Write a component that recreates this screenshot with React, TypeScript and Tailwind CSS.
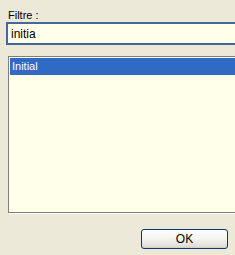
import React from "react";

export default function App() {
  return (
    <div
      className="w-[235px] h-[255px] overflow-hidden bg-[#ECE9D8] flex flex-col text-[11px] text-black"
      style={{ fontFamily: '"Liberation Sans", Arial, sans-serif' }}
    >
      <div className="pt-[9px] pl-[8px] h-[22px] leading-[13px]">Filtre :</div>
      <div className="ml-[6px] w-[240px] h-[23px] border-2 border-[#45679A] bg-[#FFFFEA] flex items-center pl-[3px] text-[12px] leading-none">
        initia
      </div>
      <div className="mt-[11px] ml-[8px] w-[240px] h-[157px] border border-[#7F7E78] bg-[#FFFFEA] p-[1px] shadow-[1px_1px_0_#FFFFFF]">
        <div className="h-[17px] bg-[#316AC5] text-white flex items-center pl-[2px] text-[11px]">
          Initial
        </div>
      </div>
      <div className="mt-[16px] ml-[141px] w-[87px] h-[20px] rounded-[3px] border border-[#003C74] bg-gradient-to-b from-[#FFFFFF] via-[#F3F3EF] to-[#DCDAD2] flex items-center justify-center text-[12px] shadow-[inset_0_-1px_0_#D6D0C5]">
        OK
      </div>
    </div>
  );
}
